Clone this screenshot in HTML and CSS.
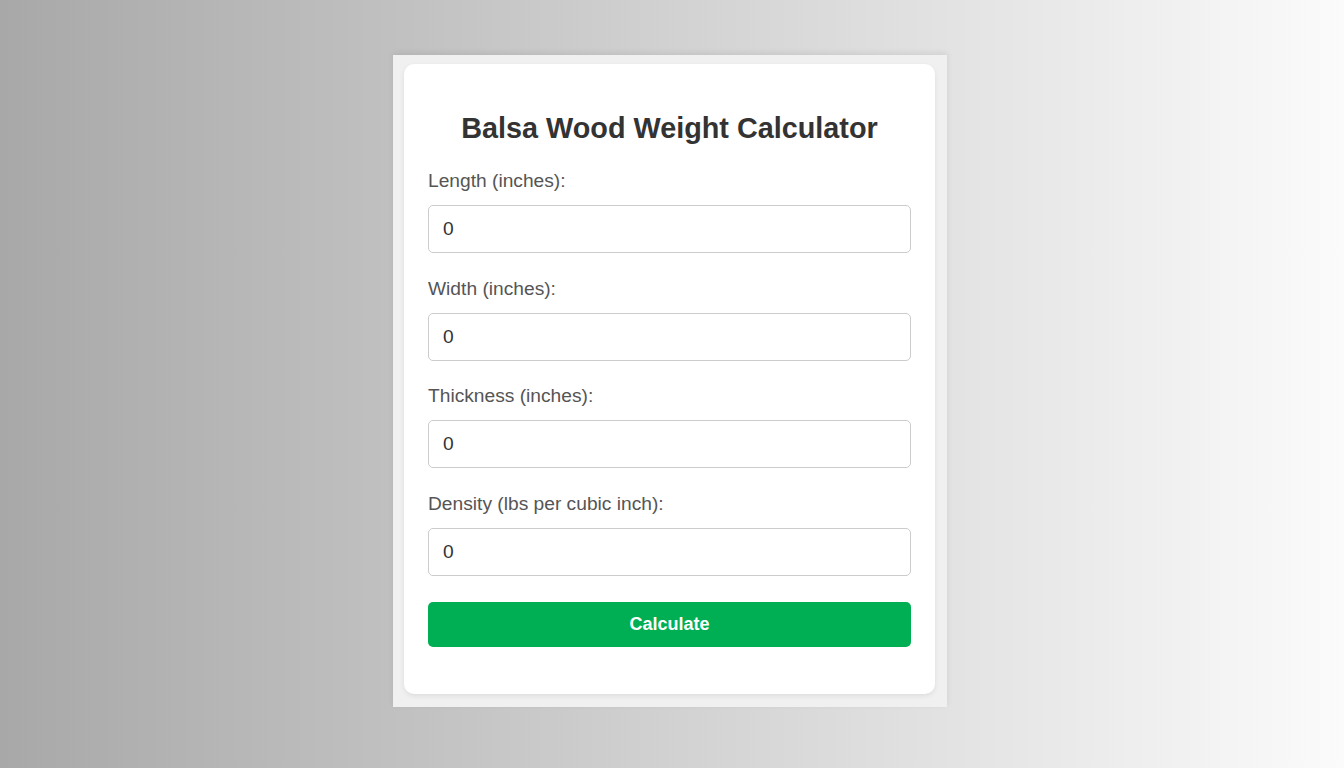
FILE: index.html
```html
<!DOCTYPE html>
<html lang="en">
<head>
    <meta charset="UTF-8">
    <meta name="viewport" content="width=device-width, initial-scale=1.0">
    <title>Balsa Wood Weight Calculator</title>
    <link rel="stylesheet" href="styles.css">
</head>
<body>
    <div class="page">
        <div class="frame">
            <div class="calculator">
                <h2 class="calc-title">Balsa Wood Weight Calculator</h2>

                <div class="field">
                    <label for="length">Length (inches):</label>
                    <input type="number" id="length" value="0">
                </div>

                <div class="field">
                    <label for="width">Width (inches):</label>
                    <input type="number" id="width" value="0">
                </div>

                <div class="field">
                    <label for="thickness">Thickness (inches):</label>
                    <input type="number" id="thickness" value="0">
                </div>

                <div class="field">
                    <label for="density">Density (lbs per cubic inch):</label>
                    <input type="number" id="density" value="0">
                </div>

                <button class="calc-button" type="button">Calculate</button>
                <div class="result" id="result"></div>
            </div>
        </div>
    </div>
</body>
</html>
```

FILE: styles.css
```css
html, body {
    margin: 0;
    height: 100%;
}

body {
    font-family: "Liberation Sans", Arial, sans-serif;
    background: linear-gradient(to right, #a8a8a8, #fbfbfb);
}

.page {
    display: flex;
    justify-content: center;
    align-items: flex-start;
    padding-top: 55px;
    padding-right: 4px;
}

/* light grey frame round the card */
.frame {
    width: 554px;
    box-sizing: border-box;
    padding: 9px 12px 13px 11px;
    background: #f0f0f0;
    box-shadow: 0 -2px 6px rgba(0,0,0,0.08);
}

.calculator {
    background: #fff;
    border-radius: 10px;
    box-shadow: 0 2px 5px rgba(0,0,0,0.08);
    padding: 24px;
}

.calc-title {
    margin: 24px 0 25px;
    text-align: center;
    font-size: 28.8px;
    font-weight: bold;
    color: #333;
    line-height: 33px;
}

.field {
    margin-bottom: 24.6px;
}

.field label {
    display: block;
    margin-bottom: 13px;
    font-size: 19.2px;
    line-height: 22px;
    color: #555;
}

.field input {
    display: block;
    width: 100%;
    box-sizing: border-box;
    padding: 12px 14px;
    border: 1px solid #ccc;
    border-radius: 5px;
    font-family: inherit;
    font-size: 19.2px;
    line-height: 22px;
    height: 48px;
    color: #333;
    background: #fff;
}

.field input::-webkit-inner-spin-button,
.field input::-webkit-outer-spin-button {
    -webkit-appearance: none;
    margin: 0;
}

.calc-button {
    display: block;
    width: 100%;
    margin-top: 26px;
    padding: 12px 0;
    border: none;
    border-radius: 5px;
    background: #00af53;
    color: #fff;
    font-family: inherit;
    font-size: 18px;
    font-weight: bold;
    line-height: 21px;
    cursor: pointer;
}

.result {
    margin-top: 23px;
}
```
